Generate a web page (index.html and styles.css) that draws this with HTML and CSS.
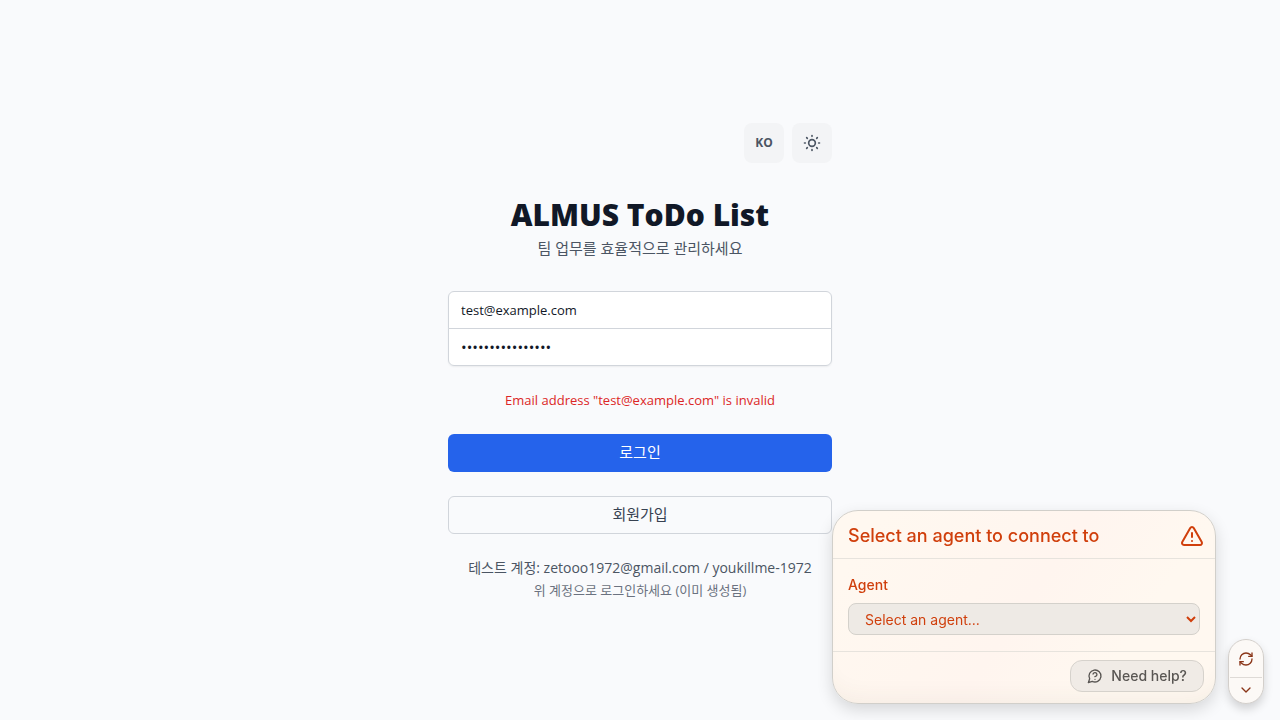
FILE: index.html
```
<!DOCTYPE html>
<html lang="ko">
<head>
<meta charset="utf-8">
<meta name="viewport" content="width=device-width, initial-scale=1">
<title>ALMUS ToDo List</title>
<link rel="stylesheet" href="styles.css">
</head>
<body>
<main class="page">
  <div class="login">
    <div class="tools">
      <button class="tool" type="button">KO</button>
      <button class="tool" type="button" aria-label="Theme">
        <svg class="icon-sun" viewBox="0 0 24 24" aria-hidden="true"><path d="M12 3v1m0 16v1m9-9h-1M4 12H3m15.364 6.364l-.707-.707M6.343 6.343l-.707-.707m12.728 0l-.707.707M6.343 17.657l-.707.707M16 12a4 4 0 11-8 0 4 4 0 018 0z"/></svg>
      </button>
    </div>
    <header class="heading">
      <h1 class="title">ALMUS ToDo List</h1>
      <p class="subtitle">팀 업무를 효율적으로 관리하세요</p>
    </header>
    <form class="form">
      <div class="fields">
        <input class="field" type="email" aria-label="Email" value="test@example.com">
        <input class="field field-password" type="password" aria-label="Password" value="youkillme-197200">
      </div>
      <p class="error" role="alert">Email address "test@example.com" is invalid</p>
      <button class="btn btn-primary" type="button">로그인</button>
      <button class="btn btn-outline" type="button">회원가입</button>
      <div class="notes">
        <p class="account">테스트 계정: zetooo1972@gmail.com / youkillme-1972</p>
        <p class="hint">위 계정으로 로그인하세요 (이미 생성됨)</p>
      </div>
    </form>
  </div>
</main>

<section class="panel">
  <header class="panel-head">
    <h2 class="panel-title">Select an agent to connect to</h2>
    <svg class="icon-warning" viewBox="0 0 24 24" aria-hidden="true"><path d="m21.73 18-8-14a2 2 0 0 0-3.48 0l-8 14A2 2 0 0 0 4 21h16a2 2 0 0 0 1.73-3Z"/><path d="M12 9v4M12 17h.01"/></svg>
  </header>
  <div class="panel-body">
    <label class="panel-label" for="agent">Agent</label>
    <select class="agent" id="agent"><option>Select an agent...</option></select>
  </div>
  <footer class="panel-foot">
    <button class="help" type="button">
      <svg class="icon-help" viewBox="0 0 24 24" aria-hidden="true"><path d="M7.9 20A9 9 0 1 0 4 16.1L2 22Z"/><path d="M9.09 9a3 3 0 0 1 5.83 1c0 2-3 3-3 3M12 17h.01"/></svg>
      Need help?
    </button>
  </footer>
</section>

<div class="dock">
  <button class="dock-btn dock-refresh" type="button" aria-label="Refresh">
    <svg class="icon-refresh" viewBox="0 0 24 24" aria-hidden="true"><path d="M3 12a9 9 0 0 1 9-9 9.75 9.75 0 0 1 6.74 2.74L21 8"/><path d="M21 3v5h-5"/><path d="M21 12a9 9 0 0 1-9 9 9.75 9.75 0 0 1-6.74-2.74L3 16"/><path d="M8 16H3v5"/></svg>
  </button>
  <button class="dock-btn" type="button" aria-label="Collapse">
    <svg class="icon-chevron" viewBox="0 0 24 24" aria-hidden="true"><path d="m6 9 6 6 6-6"/></svg>
  </button>
</div>
</body>
</html>
```
FILE: styles.css
```
* { box-sizing: border-box; }
body {
  margin: 0;
  background: #f9fafc;
  color: #111827;
  font-family: "Open Sans", "Noto Sans CJK KR", sans-serif;
  font-size: 14px;
  line-height: 20px;
}
h1, h2, p { margin: 0; }
button, input, select { font: inherit; margin: 0; }
button { cursor: pointer; }
svg { fill: none; stroke: currentColor; stroke-width: 2; stroke-linecap: round; stroke-linejoin: round; flex: none; }

.page { min-height: 100vh; display: flex; align-items: center; justify-content: center; padding: 16px; }
.login { width: 100%; max-width: 384px; display: flex; flex-direction: column; gap: 32px; }
.tools { display: flex; justify-content: flex-end; gap: 8px; }
.tool {
  width: 40px; height: 40px; padding: 0; border: 0; border-radius: 8px;
  display: flex; align-items: center; justify-content: center;
  background: #f3f4f6; color: #4b5563; font-size: 12px; font-weight: 700;
}
.icon-sun { width: 20px; height: 20px; }

.heading { text-align: center; }
.title { font-size: 30px; line-height: 40px; font-weight: 800; color: #111827; }
.subtitle { margin-top: 4px; font-size: 15px; line-height: 18px; color: #4b5563; padding-bottom: 2px; }

.form { display: flex; flex-direction: column; gap: 24px; }
.fields { display: flex; flex-direction: column; border-radius: 6px; box-shadow: 0 1px 2px rgba(0, 0, 0, 0.06); }
.field {
  width: 100%; height: 38px; padding: 8px 12px; border: 1px solid #d1d5db;
  border-radius: 6px 6px 0 0; background: #fff; color: #111827; font-size: 13px; outline: 0;
}
.field-password { margin-top: -1px; border-radius: 0 0 6px 6px; font-size: 15px; }
.error { text-align: center; color: #dc2626; font-size: 13px; }
.btn {
  height: 38px; padding: 0 16px 2px; border: 1px solid transparent; border-radius: 6px;
  font-size: 15px;
}
.btn-primary { background: #2563eb; color: #fff; }
.btn-outline { background: transparent; border-color: #d1d5db; color: #374151; }
.notes { text-align: center; }
.account { color: #4b5563; }
.hint { margin-top: 4px; font-size: 13px; line-height: 16px; color: #6b7280; }

.panel {
  position: fixed; right: 64px; bottom: 16px; width: 384px;
  border: 1px solid #d1cfca; border-radius: 26px; overflow: hidden;
  background: linear-gradient(125deg, #fff8f0 10%, #fff6ef 38%, #fff5ef 50%, #fff8f0 75%);
  box-shadow: 0 6px 16px rgba(0, 0, 0, 0.14), inset 0 -20px 24px -16px rgba(80, 70, 50, 0.06);
  color: #d03f0c; font-family: Inter, sans-serif;
}
.panel-head { display: flex; align-items: center; justify-content: space-between; padding: 12px 11px 9px 15px; border-bottom: 1px solid #e7e3dd; }
.panel-title { font-size: 18px; line-height: 26px; font-weight: 450; }
.icon-warning { width: 24px; height: 24px; }
.panel-body { display: flex; flex-direction: column; gap: 8px; padding: 16px 15px; }
.panel-label { font-weight: 500; }
.agent {
  width: 100%; height: 32px; padding: 0 0 0 12px; border: 1px solid #d4d1cb; border-radius: 8px;
  background: #eeeae5; color: inherit; font-size: 14px;
}
.panel-foot { display: flex; justify-content: flex-end; padding: 8px 11px 11px; border-top: 1px solid #e7e3dd; }
.help {
  height: 32px; padding: 0 16px; border: 1px solid #d6d2cc; border-radius: 12px;
  display: flex; align-items: center; gap: 8px; background: #f0ebe6; color: #595653; font-weight: 500;
}
.icon-help { width: 16px; height: 16px; }

.dock {
  position: fixed; right: 16px; bottom: 16px; width: 36px;
  border: 1px solid #d3cfcb; border-radius: 18px; padding: 0 1px;
  display: flex; flex-direction: column; background: #fcf9f6; color: #8a3518;
  box-shadow: 0 5px 10px rgba(0, 0, 0, 0.16);
}
.dock-btn { height: 25px; padding: 0 0 2px; border: 0; background: transparent; color: inherit; display: flex; align-items: center; justify-content: center; }
.dock-refresh { height: 38px; padding: 0; border-bottom: 1px solid #dedad6; }
.icon-refresh { width: 16px; height: 16px; }
.icon-chevron { width: 16px; height: 16px; }
```
